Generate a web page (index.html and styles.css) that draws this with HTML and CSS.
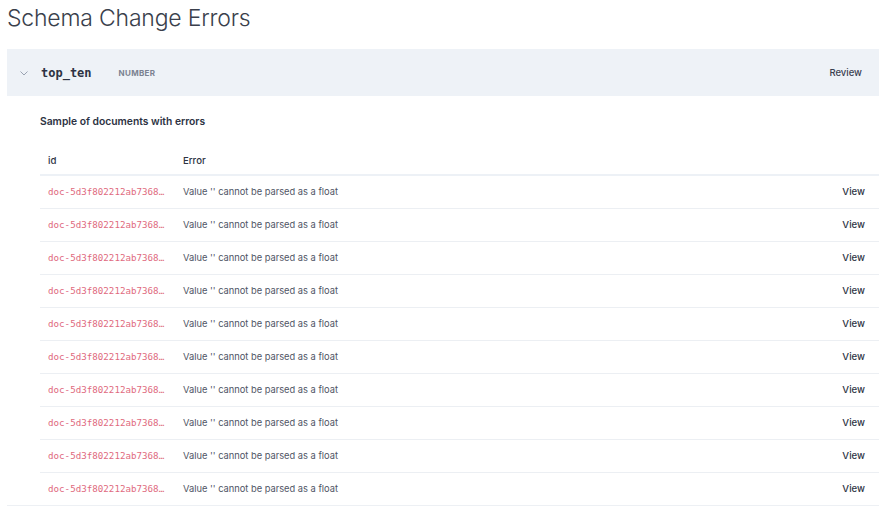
FILE: index.html
```html
<!DOCTYPE html>
<html>
<head>
<meta charset="utf-8">
<link rel="stylesheet" href="styles.css">
</head>
<body>
<h1 class="title">Schema Change Errors</h1>
<section class="field">
  <div class="field-head">
    <svg class="chev" width="8" height="5" viewBox="0 0 8 5"><path d="M0.5 0.5 L4 4 L7.5 0.5" fill="none" stroke="#9aa3b2" stroke-width="1"/></svg>
    <span class="fname">top_ten</span>
    <span class="ftype">NUMBER</span>
    <span class="review">Review</span>
  </div>
  <div class="field-body">
    <h2 class="sample">Sample of documents with errors</h2>
    <table class="errors">
      <thead><tr><th class="c-id">id</th><th class="c-err">Error</th><th class="c-act"></th></tr></thead>
      <tbody>
        <tr><td class="c-id"><span class="docid">doc-5d3f802212ab7368e4a1</span></td><td class="c-err">Value '' cannot be parsed as a float</td><td class="c-act">View</td></tr>
        <tr><td class="c-id"><span class="docid">doc-5d3f802212ab7368e4a1</span></td><td class="c-err">Value '' cannot be parsed as a float</td><td class="c-act">View</td></tr>
        <tr><td class="c-id"><span class="docid">doc-5d3f802212ab7368e4a1</span></td><td class="c-err">Value '' cannot be parsed as a float</td><td class="c-act">View</td></tr>
        <tr><td class="c-id"><span class="docid">doc-5d3f802212ab7368e4a1</span></td><td class="c-err">Value '' cannot be parsed as a float</td><td class="c-act">View</td></tr>
        <tr><td class="c-id"><span class="docid">doc-5d3f802212ab7368e4a1</span></td><td class="c-err">Value '' cannot be parsed as a float</td><td class="c-act">View</td></tr>
        <tr><td class="c-id"><span class="docid">doc-5d3f802212ab7368e4a1</span></td><td class="c-err">Value '' cannot be parsed as a float</td><td class="c-act">View</td></tr>
        <tr><td class="c-id"><span class="docid">doc-5d3f802212ab7368e4a1</span></td><td class="c-err">Value '' cannot be parsed as a float</td><td class="c-act">View</td></tr>
        <tr><td class="c-id"><span class="docid">doc-5d3f802212ab7368e4a1</span></td><td class="c-err">Value '' cannot be parsed as a float</td><td class="c-act">View</td></tr>
        <tr><td class="c-id"><span class="docid">doc-5d3f802212ab7368e4a1</span></td><td class="c-err">Value '' cannot be parsed as a float</td><td class="c-act">View</td></tr>
        <tr><td class="c-id"><span class="docid">doc-5d3f802212ab7368e4a1</span></td><td class="c-err">Value '' cannot be parsed as a float</td><td class="c-act">View</td></tr>
      </tbody>
    </table>
  </div>
</section>
</body>
</html>
```
FILE: styles.css
```css
* { box-sizing: border-box; }
body {
  margin: 0;
  padding: 0 1px 0 7px;
  font-family: Inter, "Noto Sans", sans-serif;
  color: #2d3343;
  background: #fff;
}
.title {
  margin: 0;
  padding: 5px 0 0 0;
  height: 49px;
  font-size: 23px;
  font-weight: 300;
  color: #3a3f4c;
  letter-spacing: -0.2px;
  line-height: 26px;
}
.field {
  border-bottom: 1px solid #edf0f4;
}
.field-head {
  height: 47px;
  background: #eef2f7;
  display: flex;
  align-items: center;
  padding: 0 17px 0 13px;
}
.chev { margin-right: 13px; margin-top: 1px; }
.fname {
  font-family: "DejaVu Sans Mono", monospace;
  font-weight: bold;
  font-size: 12px;
  color: #2d3343;
  margin-right: 27px;
}
.ftype {
  font-size: 8px;
  font-weight: 700;
  color: #7b8291;
  letter-spacing: 0.3px;
}
.review {
  margin-left: auto;
  font-size: 9.5px;
  font-weight: 500;
  color: #3a4050;
}
.field-body {
  padding: 0 0 0 33px;
}
.sample {
  margin: 0;
  padding-top: 18px;
  height: 51px;
  font-size: 10.3px;
  font-weight: 600;
  color: #2d3343;
  line-height: 14px;
}
.errors {
  width: 100%;
  border-collapse: collapse;
  font-size: 9.3px;
  table-layout: fixed;
}
.errors th {
  text-align: left;
  font-weight: 500;
  color: #2d3343;
  height: 28px;
  padding: 7px 8px 0 8px;
  border-bottom: 2px solid #edf1f6;
  vertical-align: top;
  font-size: 9.6px;
  line-height: 14px;
}
.errors td {
  height: 33px;
  padding: 1px 8px 0 8px;
  border-bottom: 1px solid #eceff3;
  color: #4f5565;
  line-height: 14px;
}
.errors tbody tr:last-child td { border-bottom: none; }
.c-id { width: 135px; }
.c-act { width: 80px; text-align: right; padding-right: 14px !important; }
.errors td.c-act { color: #2d3343; font-weight: 500; font-size: 9.6px; }
.docid {
  display: block;
  overflow: hidden;
  white-space: nowrap;
  text-overflow: ellipsis;
  font-family: "DejaVu Sans Mono", monospace;
  font-size: 9.2px;
  color: #e06a7e;
}
```
